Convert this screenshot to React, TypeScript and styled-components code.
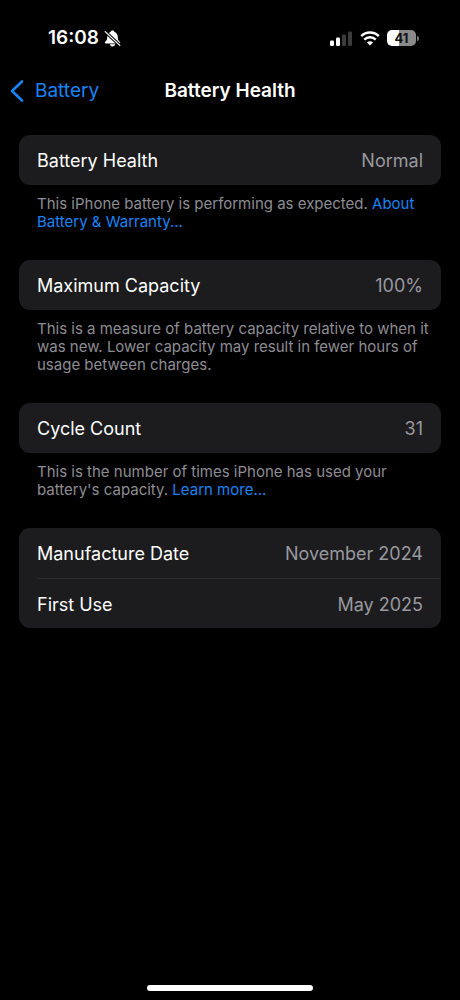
import React from "react";
import styled, { createGlobalStyle } from "styled-components";

const GlobalStyle = createGlobalStyle`
  * { box-sizing: border-box; }
  body {
    margin: 0;
    background: #000;
    color: #fff;
    font-family: Inter, "Liberation Sans", sans-serif;
  }
`;

const Screen = styled.div`
  min-height: 100vh;
  display: flex;
  flex-direction: column;
`;

const StatusBar = styled.header`
  display: flex;
  align-items: center;
  justify-content: space-between;
  height: 64px;
  padding: 12px 41px 0 48px;
`;

const StatusGroup = styled.div<{ $gap: number }>`
  display: flex;
  align-items: center;
  gap: ${(p) => p.$gap}px;
`;

const Clock = styled.time`
  font-size: 19px;
  line-height: 24px;
  font-weight: 600;
`;

const BatteryPill = styled.div`
  display: flex;
  align-items: center;
  gap: 1px;
`;

const BatteryBody = styled.div<{ $level: number }>`
  width: 29px;
  height: 16px;
  border-radius: 5px;
  background: linear-gradient(to right, #fff ${(p) => p.$level}%, #8a8a8a ${(p) => p.$level}%);
  color: #111;
  font-size: 13px;
  line-height: 16px;
  font-weight: 700;
  text-align: center;
`;

const BatteryCap = styled.div`
  width: 2px;
  height: 5px;
  border-radius: 0 2px 2px 0;
  background: #777;
`;

const NavBar = styled.nav`
  display: grid;
  grid-template-columns: 1fr auto 1fr;
  align-items: center;
  height: 52px;
  padding: 2px 10px 0;
`;

const BackButton = styled.button`
  display: flex;
  align-items: center;
  gap: 11px;
  justify-self: start;
  padding: 0;
  border: 0;
  background: none;
  color: #1a84f5;
  font: inherit;
  font-size: 19px;
  line-height: 24px;
  cursor: pointer;
`;

const Title = styled.h1`
  margin: 0;
  font-size: 19px;
  line-height: 24px;
  font-weight: 600;
`;

const Content = styled.main`
  flex: 1;
  display: flex;
  flex-direction: column;
  gap: 29px;
  padding: 19px 19px 32px;
`;

const Card = styled.dl`
  margin: 0;
  padding-left: 18px;
  border-radius: 11px;
  background: #1c1c1e;
`;

const Row = styled.div`
  display: flex;
  align-items: center;
  justify-content: space-between;
  height: 50px;
  padding: 2px 18px 0 0;
  font-size: 18px;
  line-height: 24px;

  & + & {
    border-top: 1px solid #2d2d30;
  }
`;

const Label = styled.dt``;

const Value = styled.dd`
  margin: 0;
  color: #98989f;
`;

const Footnote = styled.p`
  margin: 0;
  padding: 10px 6px 0 18px;
  color: #8d8d93;
  font-size: 15px;
  line-height: 18px;
`;

const Link = styled.a`
  color: #1a84f5;
  text-decoration: none;
`;

const HomeIndicator = styled.div`
  align-self: center;
  width: 36%;
  height: 6px;
  margin-bottom: 9px;
  border-radius: 3px;
  background: #fff;
`;

const MutedBell = () => (
  <svg width="17" height="17" viewBox="0 0 17 17" aria-label="Silent mode">
    <path d="M8.500.4c-1 0-1.800.6-2 1.500C4.300 2.700 3.200 4.600 3.200 7c0 2.700-.6 3.500-1.900 4.700-.8.8-.5 1.700.5 1.700h13.400c1 0 1.300-.9.500-1.700-1.300-1.200-1.900-2-1.900-4.700 0-2.400-1.100-4.300-3.300-5.100-.2-.9-1-1.500-2-1.500z" fill="#fff" />
    <path d="M5.800 14.300h5.400c-.3 1.300-1.300 2.200-2.700 2.200s-2.400-.9-2.700-2.200z" fill="#fff" />
    <path d="M0 .6l17 15.800" stroke="#000" strokeWidth="3.200" />
    <path d="M1.200 1.600l14.600 13.800" stroke="#fff" strokeWidth="1.300" strokeLinecap="round" />
  </svg>
);

const Signal = () => (
  <svg width="23" height="15" viewBox="0 0 23 15" aria-label="Cellular signal">
    <rect x="0" y="9.500" width="4" height="5.500" rx="1.200" fill="#fff" />
    <rect x="6" y="6.500" width="4" height="8.500" rx="1.200" fill="#fff" />
    <rect x="12" y="3.500" width="4" height="11.500" rx="1.200" fill="#3c3c3c" />
    <rect x="18" y="0.500" width="4" height="14.500" rx="1.200" fill="#3c3c3c" />
  </svg>
);

const Wifi = () => (
  <svg width="20" height="15" viewBox="0 0 20 15" aria-label="Wi-Fi">
    <g fill="none" stroke="#fff" strokeWidth="2.400">
      <path d="M1.200 5.200C6 .3 14 .3 18.800 5.200" />
      <path d="M4.300 8.600c3.200-3.200 8.200-3.200 11.400 0" />
    </g>
    <path d="M10 14.600l-3.100-3.100c1.800-1.600 4.400-1.600 6.200 0z" fill="#fff" />
  </svg>
);

const Chevron = () => (
  <svg width="14" height="22" viewBox="0 0 14 22" aria-hidden="true">
    <path d="M12 1.500L2 11l10 9.500" fill="none" stroke="currentColor" strokeWidth="2.600" strokeLinecap="round" strokeLinejoin="round" />
  </svg>
);

type Item = { label: string; value: string };

const Section = ({ items, children }: { items: Item[]; children?: React.ReactNode }) => (
  <section>
    <Card>
      {items.map((item) => (
        <Row key={item.label}>
          <Label>{item.label}</Label>
          <Value>{item.value}</Value>
        </Row>
      ))}
    </Card>
    {children && <Footnote>{children}</Footnote>}
  </section>
);

export default function App() {
  return (
    <Screen>
      <GlobalStyle />
      <StatusBar>
        <StatusGroup $gap={5}>
          <Clock>16:08</Clock>
          <MutedBell />
        </StatusGroup>
        <StatusGroup $gap={7}>
          <Signal />
          <Wifi />
          <BatteryPill>
            <BatteryBody $level={41}>41</BatteryBody>
            <BatteryCap />
          </BatteryPill>
        </StatusGroup>
      </StatusBar>
      <NavBar>
        <BackButton type="button">
          <Chevron />
          Battery
        </BackButton>
        <Title>Battery Health</Title>
      </NavBar>
      <Content>
        <Section items={[{ label: "Battery Health", value: "Normal" }]}>
          This iPhone battery is performing as expected. <Link href="#warranty">About Battery &amp; Warranty...</Link>
        </Section>
        <Section items={[{ label: "Maximum Capacity", value: "100%" }]}>
          This is a measure of battery capacity relative to when it was new. Lower capacity may result in fewer hours of usage between charges.
        </Section>
        <Section items={[{ label: "Cycle Count", value: "31" }]}>
          This is the number of times iPhone has used your battery's capacity. <Link href="#cycles">Learn more...</Link>
        </Section>
        <Section
          items={[
            { label: "Manufacture Date", value: "November 2024" },
            { label: "First Use", value: "May 2025" },
          ]}
        />
      </Content>
      <HomeIndicator />
    </Screen>
  );
}
